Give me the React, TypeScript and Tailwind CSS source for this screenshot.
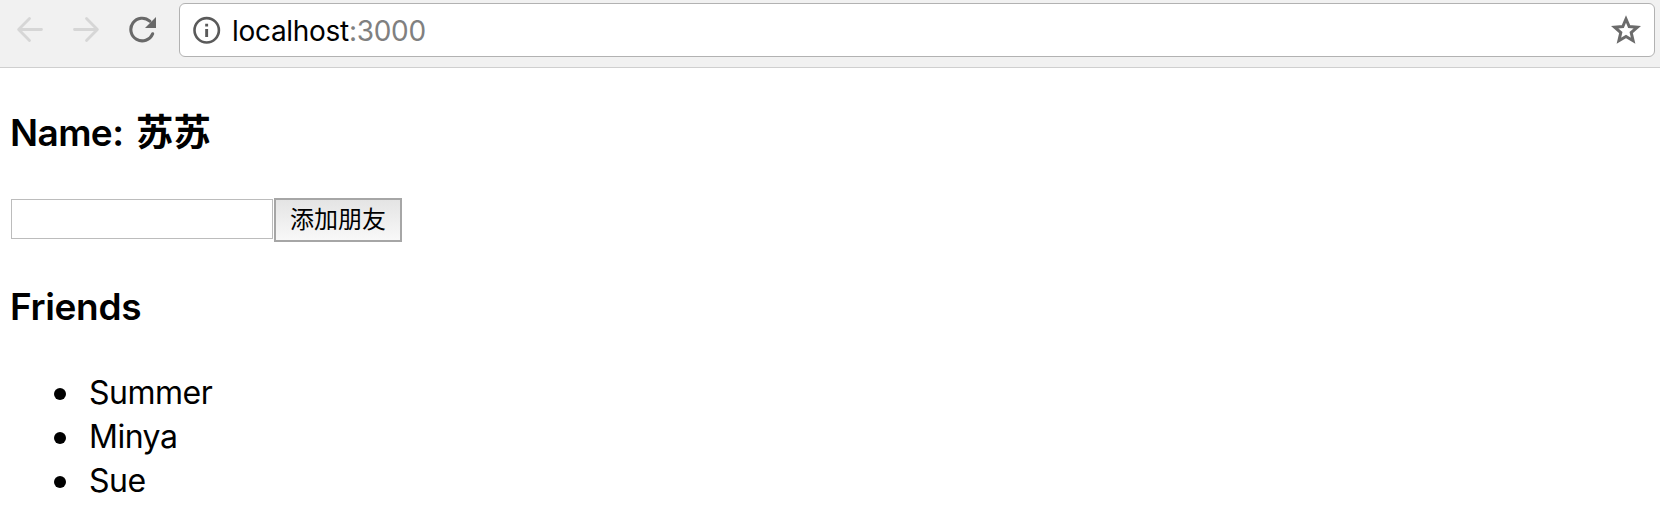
import { useState } from "react";

const FONT = "font-['Inter','Noto_Sans_CJK_SC',sans-serif]";

function Arrow({ flip = false }: { flip?: boolean }) {
  return (
    <svg width="28" height="28" viewBox="0 0 28 28" className={flip ? "-scale-x-100" : ""} fill="none" stroke="#d6d6d6" strokeWidth="2.8" strokeLinecap="round" strokeLinejoin="round">
      <path d="M25.5 14.5H3M13.5 3.4L2.6 14.5L13.5 25.6" />
    </svg>
  );
}

function Toolbar() {
  return (
    <header className="flex h-[68px] items-start border-b border-[#cfcfcf] bg-[#f1f1f1] pt-[3px] pr-[5px] pl-4">
      <div className="flex w-[163px] shrink-0 items-center pt-3">
        <Arrow />
        <span className="w-7" />
        <Arrow flip />
        <svg width="28" height="28" viewBox="0 0 28 28" className="ml-7" fill="none">
          <path d="M24.6 18.8A11.3 11.3 0 1 1 21.8 6.2" stroke="#696969" strokeWidth="3.1" strokeLinecap="round" />
          <path d="M28 2V13H17Z" fill="#696969" />
        </svg>
      </div>
      <div className="flex h-[54px] grow items-center rounded-md border border-[#b2b2b2] bg-white pr-[13px] pl-[13px]">
        <svg width="28" height="28" viewBox="0 0 28 28" fill="none">
          <circle cx="13.7" cy="14.3" r="12.2" stroke="#5a5a5a" strokeWidth="2.6" />
          <path d="M12.2 7.8h2.9v2.8h-2.9zM12.2 12.9h2.9v8.2h-2.9z" fill="#5a5a5a" />
        </svg>
        <div className="ml-[11px] grow pt-0.5 text-[28px] leading-[50px] tracking-[-0.3px] text-black">
          localhost<span className="text-[#808080]">:3000</span>
        </div>
        <svg width="30" height="30" viewBox="0 0 30 30" fill="none" stroke="#6b6b6b" strokeWidth="3">
          <path d="M15 4L18.2 11.5L26.4 12.2L20.2 17.6L22.1 25.7L15 21.4L7.9 25.7L9.8 17.6L3.6 12.2L11.8 11.5Z" />
        </svg>
      </div>
    </header>
  );
}

export default function App() {
  const [friends, setFriends] = useState(["Summer", "Minya", "Sue"]);
  const [name, setName] = useState("");
  const addFriend = () => {
    if (name.trim()) {
      setFriends([...friends, name.trim()]);
      setName("");
    }
  };

  return (
    <div className={`h-[512px] overflow-hidden bg-white text-black ${FONT}`}>
      <Toolbar />
      <main className="pl-[10px]">
        <h3 className="mt-[43px] flex h-[44px] items-center text-[37px] leading-[44px] font-semibold tracking-[-0.6px]">
          <span className="w-[126px]">Name:</span>
          <span className="text-[37.4px] tracking-normal">苏苏</span>
        </h3>
        <div className="mt-[43px] flex h-11 items-start pl-px">
          <input
            className="mt-px h-10 w-[262px] border border-[#bcbcbc] bg-white px-1 text-[22px] outline-none"
            value={name}
            onChange={(e) => setName(e.target.value)}
          />
          <button
            className="ml-px h-11 w-32 border-2 border-[#a6a6a6] bg-linear-to-b from-[#e4e4e4] to-[#f8f8f8] text-[24px] leading-[40px] whitespace-nowrap"
            onClick={addFriend}
          >
            添加朋友
          </button>
        </div>
        <h3 className="mt-[43px] h-[44px] text-[37px] leading-[44px] font-semibold tracking-[-0.35px]">Friends</h3>
        <ul className="mt-[42px] text-[32px] leading-[44px] tracking-[-0.5px]">
          {friends.map((friend, i) => (
            <li key={i} className="flex items-center pl-11">
              <span className="mt-0.5 mr-[23px] size-3 rounded-full bg-black" />
              {friend}
            </li>
          ))}
        </ul>
      </main>
    </div>
  );
}
